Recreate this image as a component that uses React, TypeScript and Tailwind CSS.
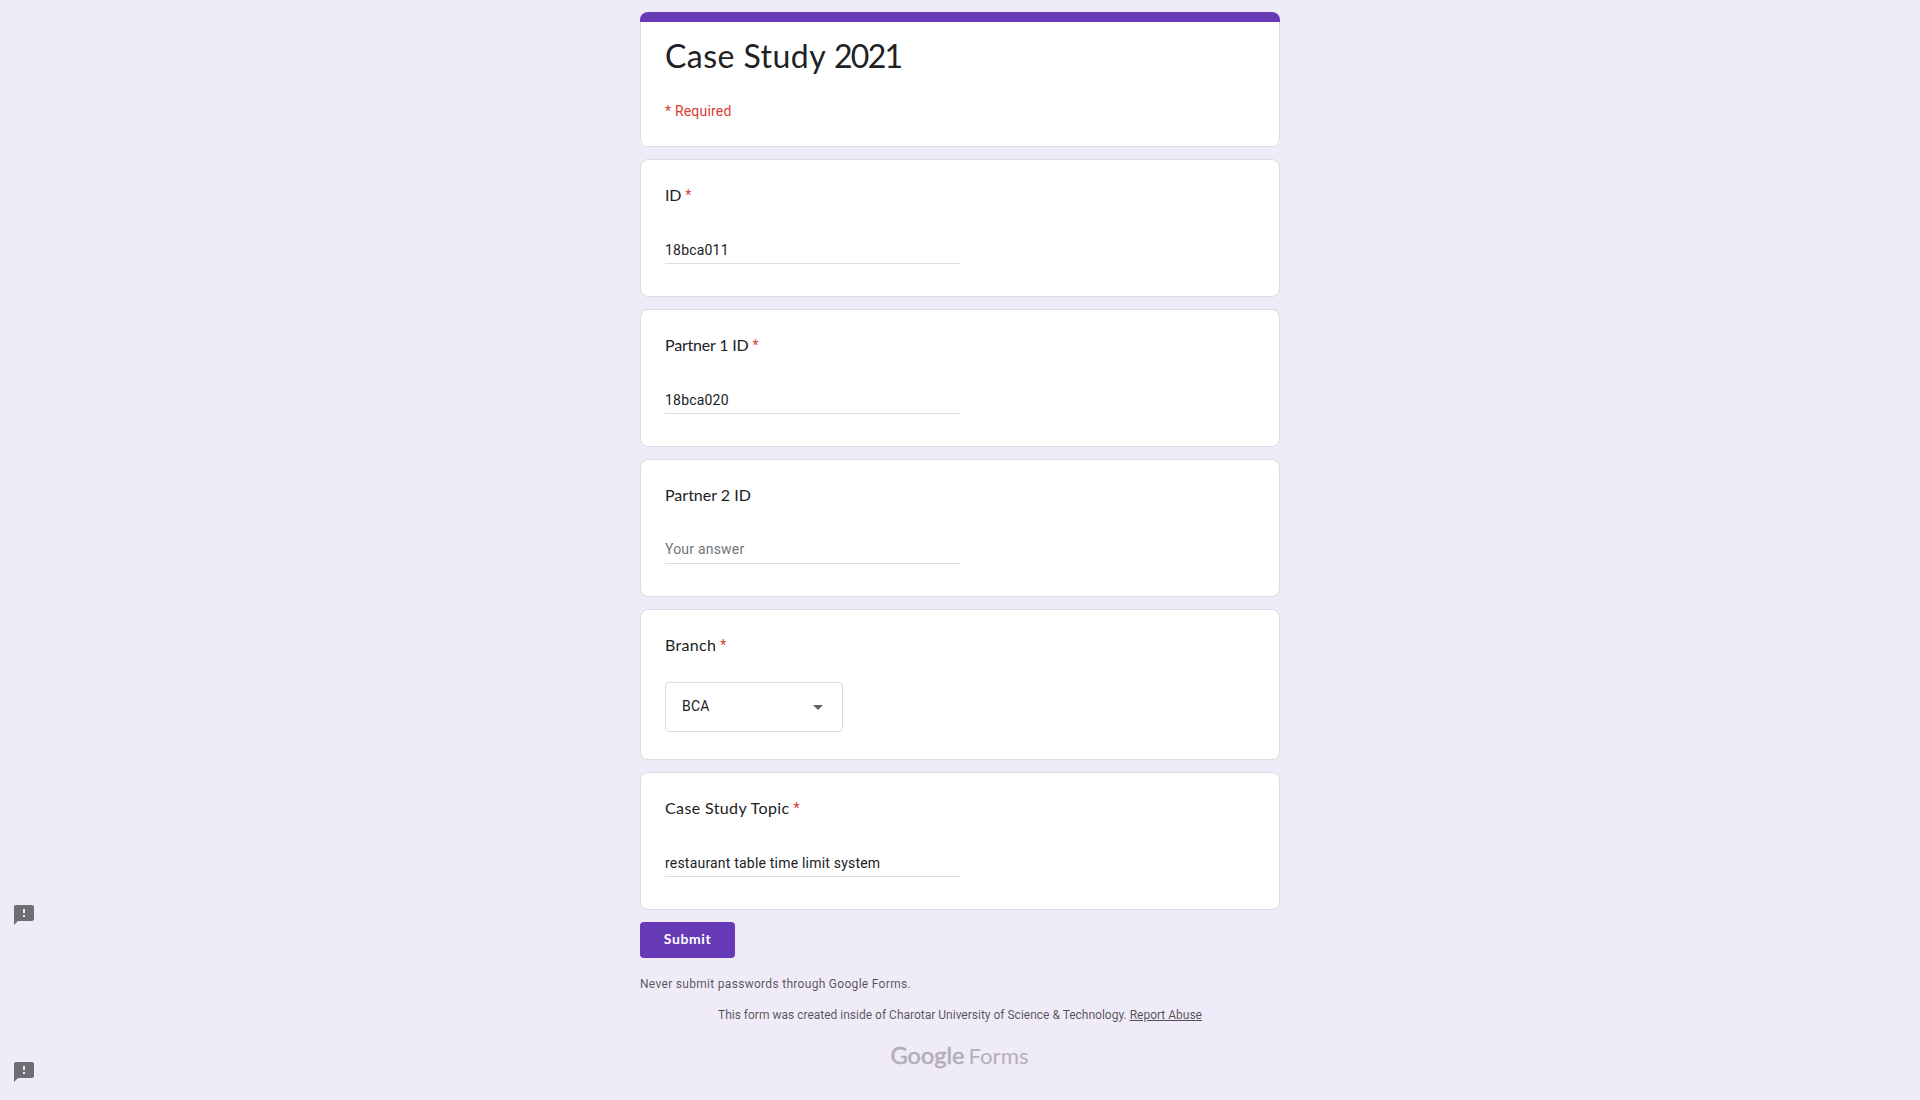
import type { ReactNode } from "react";

const display = "font-[Lato,'Liberation_Sans',sans-serif]";

function Card({ children, className = "" }: { children: ReactNode; className?: string }) {
  return (
    <section className={`w-full rounded-lg border border-[#dadce0] bg-white px-6 ${className}`}>
      {children}
    </section>
  );
}

function Label({ text, spacing, required = false }: { text: string; spacing: string; required?: boolean }) {
  return (
    <h2 className={`flex h-6 items-start whitespace-nowrap text-base leading-6 text-[#202124] ${display}`}>
      <span className={spacing}>{text}</span>
      {required && <span className="pl-1 font-[Roboto,sans-serif] text-sm leading-6 text-[#d93c32]">*</span>}
    </h2>
  );
}

interface QuestionProps {
  label: string;
  spacing: string;
  required?: boolean;
  value?: string;
}

function TextQuestion({ label, spacing, required, value }: QuestionProps) {
  return (
    <Card className="h-[138px] pt-[23px]">
      <Label text={label} spacing={spacing} required={required} />
      <div
        className={`mt-[30px] h-[27px] w-[295px] border-b border-[#dadce0] text-sm leading-6 tracking-[0.2px] ${
          value ? "text-[#202124]" : "text-[#70757a]"
        }`}
      >
        <span className={value ? "block pt-px" : "block"}>{value ?? "Your answer"}</span>
      </div>
    </Card>
  );
}

function FeedbackIcon({ className }: { className: string }) {
  return (
    <svg viewBox="0 0 24 24" className={`absolute left-3 size-6 fill-[#706d75] ${className}`}>
      <path d="M20 2H4c-1.1 0-1.99.9-1.99 2L2 22l4-4h14c1.1 0 2-.9 2-2V4c0-1.1-.9-2-2-2zm-7 12h-2v-2h2v2zm0-4h-2V6h2v4z" />
    </svg>
  );
}

export default function App() {
  return (
    <main className="relative flex h-[1100px] w-full justify-center overflow-hidden bg-[#f0ebf8] pt-3 font-[Roboto,sans-serif]">
      <div className="flex w-[640px] flex-col">
        <div className="flex flex-col gap-3">
          <section className="h-[135px] overflow-hidden rounded-lg bg-white">
            <div className="h-2.5 bg-[#673ab7]" />
            <div className="h-[125px] rounded-b-lg border border-t-0 border-[#dadce0] px-6 pt-[14px]">
              <h1 className={`h-10 whitespace-nowrap text-[32px] leading-10 tracking-[0.45px] text-[#202124] ${display}`}>
                Case Study <span className="tracking-[-1.7px]">2021</span>
              </h1>
              <p className="mt-[25px] text-sm leading-5 tracking-[0.2px] text-[#d93c32]">* Required</p>
            </div>
          </section>
          <TextQuestion label="ID" spacing="tracking-[-0.2px]" required value="18bca011" />
          <TextQuestion label="Partner 1 ID" spacing="tracking-[-0.2px]" required value="18bca020" />
          <TextQuestion label="Partner 2 ID" spacing="tracking-[0px]" />
          <Card className="h-[151px] pt-[23px]">
            <Label text="Branch" spacing="tracking-[0.3px]" required />
            <div className="mt-[25px] flex h-[50px] w-[178px] items-center justify-between rounded border border-[#dadce0] pr-3 pl-4 text-sm tracking-[0.2px] text-[#202124]">
              <span className="pb-0.5">BCA</span>
              <svg viewBox="0 0 24 24" className="size-6 fill-[#5f6368]">
                <path d="M7 10l5 5 5-5z" />
              </svg>
            </div>
          </Card>
          <TextQuestion
            label="Case Study Topic"
            spacing="tracking-[0.37px]"
            required
            value="restaurant table time limit system"
          />
        </div>
        <button className={`mt-3 flex h-9 w-[95px] items-center justify-center rounded bg-[#673ab7] pb-[3px] text-sm font-bold tracking-[0.6px] text-white ${display}`}>
          Submit
        </button>
        <p className="mt-[18px] text-xs leading-4 tracking-[0.3px] text-black/66">
          Never submit passwords through Google Forms.
        </p>
        <p className="mt-[15px] text-center text-xs leading-4 text-black/66">
          This form was created inside of Charotar University of Science &amp; Technology.{" "}
          <a className="underline">Report Abuse</a>
        </p>
        <svg viewBox="0 0 148 40" className="mt-[15px] h-10 w-[148px] self-center overflow-visible fill-[#b3afb9]">
          <text x="4.5" y="26" fontFamily="Lato" fontSize="24" stroke="#b3afb9" strokeWidth="0.6" textLength="74" lengthAdjust="spacingAndGlyphs">
            Google
          </text>
          <text x="82.5" y="26" fontFamily="Lato" fontSize="21.5" textLength="60" lengthAdjust="spacingAndGlyphs">
            Forms
          </text>
        </svg>
      </div>
      <FeedbackIcon className="top-[903px]" />
      <FeedbackIcon className="top-[1060px]" />
    </main>
  );
}
